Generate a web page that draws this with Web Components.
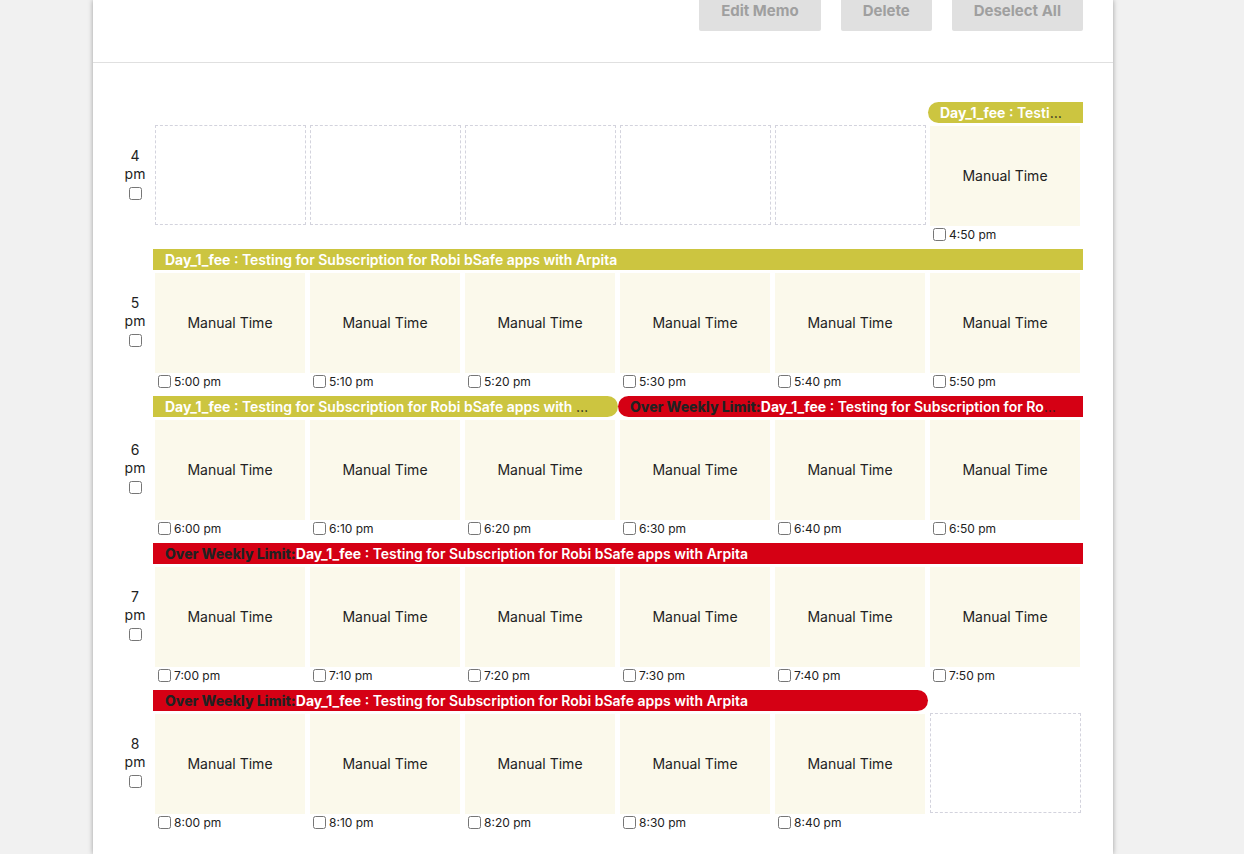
<!DOCTYPE html>
<html lang="en">
<head>
<meta charset="utf-8">
<meta name="viewport" content="width=device-width, initial-scale=1">
<title>Work Diary</title>
<style>
body { margin: 0; padding-right: 38px; background: #f1f1f1; color: #222; font: 14px/18px Inter, "Open Sans", sans-serif; }
</style>
</head>
<body>
<work-diary></work-diary>
<script>
const TASK = 'Testing for Subscription for Robi bSafe apps with Arpita';
const DIARY = [
  { hour: 4, from: 5, to: 5, bars: [{ start: 5, span: 1, round: 'left' }] },
  { hour: 5, from: 0, to: 5, bars: [{ start: 0, span: 6 }] },
  { hour: 6, from: 0, to: 5, bars: [{ start: 0, span: 3, round: 'right' }, { start: 3, span: 3, round: 'left', over: true }] },
  { hour: 7, from: 0, to: 5, bars: [{ start: 0, span: 6, over: true }] },
  { hour: 8, from: 0, to: 4, bars: [{ start: 0, span: 5, round: 'right', over: true }] }
];

class DiaryButton extends HTMLElement {
  connectedCallback() {
    this.attachShadow({ mode: 'open' }).innerHTML = `
      <style>
        :host { display: block; }
        button { display: block; height: 40px; padding: 0 22px; border: 0; border-radius: 2px; background: #e0e0e0; color: #9f9f9f; font: 700 15px/20px Inter, sans-serif; white-space: nowrap; }
      </style>
      <button type="button" disabled><slot></slot></button>`;
  }
}
customElements.define('diary-button', DiaryButton);

class MemoBar extends HTMLElement {
  connectedCallback() {
    this.attachShadow({ mode: 'open' }).innerHTML = `
      <style>
        :host { display: block; min-width: 0; box-sizing: border-box; height: 21px; padding: 0 20px 0 12px; background: #ccc540; line-height: 21px; }
        :host([over]) { background: #d50014; }
        :host([round=left]) { border-radius: 11px 0 0 11px; }
        :host([round=right]) { padding-right: 24px; border-radius: 0 11px 11px 0; }
        div { overflow: hidden; white-space: nowrap; text-overflow: ellipsis; }
        span { color: #fff; font-weight: 600; }
        b { font-weight: 700; }
        .limit { font-weight: 800; }
      </style>
      <div>${this.hasAttribute('over') ? '<b class="limit">Over Weekly Limit:</b>' : ''}<span><b>Day_1_fee</b> : <slot></slot></span></div>`;
  }
}
customElements.define('memo-bar', MemoBar);

class TimeSlot extends HTMLElement {
  connectedCallback() {
    const time = this.getAttribute('time');
    this.attachShadow({ mode: 'open' }).innerHTML = `
      <style>
        :host { display: block; min-width: 0; padding: 2px 3px 0 2px; }
        .card { display: grid; place-items: center; height: 100px; margin-top: 1px; background: #fbf9eb; }
        .empty { box-sizing: border-box; height: 100px; margin-right: -1px; border: 1px dashed #d3d3dd; }
        label { display: flex; align-items: center; gap: 3px; height: 17px; padding-left: 3px; font-size: 12px; }
        input { width: 13px; height: 13px; margin: 0; }
      </style>
      ${time ? `<div class="card">Manual Time</div><label><input type="checkbox">${time}</label>` : '<div class="empty"></div>'}`;
  }
}
customElements.define('time-slot', TimeSlot);

class HourRow extends HTMLElement {
  set entry({ hour, from, to, bars }) {
    const memos = bars.map(b => `<memo-bar style="grid-column: ${b.start + 1} / span ${b.span}"
      ${b.round ? `round="${b.round}"` : ''} ${b.over ? 'over' : ''}>${TASK}</memo-bar>`).join('');
    const slots = [0, 1, 2, 3, 4, 5].map(i =>
      `<time-slot ${i >= from && i <= to ? `time="${hour}:${i}0 pm"` : ''}></time-slot>`).join('');
    this.attachShadow({ mode: 'open' }).innerHTML = `
      <style>
        :host { display: grid; grid-template-columns: 36px minmax(0, 1fr); min-height: 147px; }
        .hour { display: flex; flex-direction: column; align-items: center; padding-top: 45px; text-align: center; }
        .hour span { display: block; width: 24px; }
        input { width: 13px; height: 13px; margin: 4px 0 0; }
        .track { display: grid; grid-template-columns: repeat(6, minmax(0, 1fr)); grid-template-rows: 21px auto; align-content: start; }
        time-slot { grid-row: 2; }
        memo-bar { grid-row: 1; }
      </style>
      <label class="hour"><span>${hour} pm</span><input type="checkbox"></label>
      <div class="track">${memos}${slots}</div>`;
  }
}
customElements.define('hour-row', HourRow);

class WorkDiary extends HTMLElement {
  connectedCallback() {
    const root = this.attachShadow({ mode: 'open' });
    root.innerHTML = `
      <style>
        :host { display: block; box-sizing: border-box; max-width: 1020px; min-height: 100vh; margin: 0 auto; background: #fff; box-shadow: 0 0 5px rgba(0, 0, 0, .35); }
        header { display: flex; justify-content: flex-end; align-items: flex-end; gap: 20px; height: 31px; padding: 0 30px 31px; overflow: hidden; border-bottom: 1px solid #e0e0e0; }
        main { padding: 39px 30px 0 24px; }
      </style>
      <header>
        <diary-button>Edit Memo</diary-button>
        <diary-button>Delete</diary-button>
        <diary-button>Deselect All</diary-button>
      </header>
      <main></main>`;
    const main = root.querySelector('main');
    for (const entry of DIARY) {
      const row = document.createElement('hour-row');
      row.entry = entry;
      main.append(row);
    }
  }
}
customElements.define('work-diary', WorkDiary);
</script>
</body>
</html>
